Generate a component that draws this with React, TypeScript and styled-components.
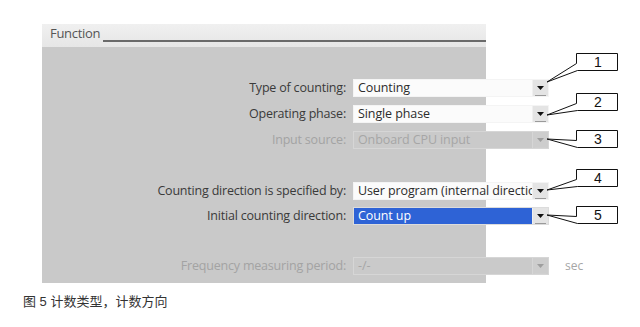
import React from "react";
import styled, { createGlobalStyle } from "styled-components";

const Global = createGlobalStyle`
  html, body { margin: 0; padding: 0; background: #ffffff; }
  body { width: 640px; height: 327px; overflow: hidden; }
`;

const Page = styled.div`
  position: relative;
  width: 640px;
  height: 327px;
  padding: 24px 0 0 42px;
  box-sizing: border-box;
  font-family: "Open Sans", "Noto Sans", sans-serif;
`;

const Panel = styled.section`
  width: 444px;
  display: flex;
  flex-direction: column;
`;

const Header = styled.div`
  height: 23px;
  display: flex;
  align-items: flex-end;
  padding: 0 0 6px 8px;
  box-sizing: border-box;
  background: linear-gradient(#f0f0f0, #e6e6e6);
`;

const HeaderTitle = styled.span`
  font-size: 13px;
  line-height: 15px;
  color: #555555;
  letter-spacing: -0.3px;
`;

const HeaderRule = styled.div`
  flex: 1;
  height: 2px;
  margin: 0 0 -1px 3px;
  background: #6a6a6a;
`;

const Body = styled.div`
  background: #c9c9c9;
  padding: 32px 0 8px 0;
  display: grid;
  grid-template-columns: 304px 196px auto;
  column-gap: 7px;
  align-items: center;
`;

const Label = styled.div<{ $disabled?: boolean; $top: number }>`
  grid-column: 1;
  margin-top: ${(p) => p.$top}px;
  text-align: right;
  font-size: 12.5px;
  line-height: 18px;
  white-space: nowrap;
  color: ${(p) => (p.$disabled ? "#a3a3a3" : "#3a3a3a")};
  letter-spacing: -0.2px;
`;

const Field = styled.div<{ $variant: "normal" | "disabled" | "selected"; $top: number }>`
  grid-column: 2;
  margin-top: ${(p) => p.$top}px;
  height: 18px;
  display: flex;
  box-sizing: border-box;
  background: ${(p) => (p.$variant === "disabled" ? "#cacaca" : "#fbfbfb")};
  border: 1px solid ${(p) => (p.$variant === "disabled" ? "#d6d6d6" : p.$variant === "selected" ? "#dcdcdc" : "#f4f4f4")};
`;

const Value = styled.div<{ $variant: "normal" | "disabled" | "selected" }>`
  flex: 1;
  min-width: 0;
  overflow: hidden;
  white-space: nowrap;
  padding-left: 4px;
  font-size: 12.5px;
  line-height: 16px;
  letter-spacing: -0.1px;
  color: ${(p) => (p.$variant === "disabled" ? "#a6a6a6" : p.$variant === "selected" ? "#ffffff" : "#2c2c2c")};
  background: ${(p) => (p.$variant === "selected" ? "#2e63d6" : "transparent")};
`;

const Button = styled.div<{ $disabled?: boolean }>`
  width: 15px;
  flex: none;
  position: relative;
  background: ${(p) => (p.$disabled ? "#cdcdcd" : "#e4e4e4")};
  border-left: 1px solid ${(p) => (p.$disabled ? "#d6d6d6" : "#f0f0f0")};
  display: flex;
  align-items: center;
  justify-content: center;
  &::after {
    content: "";
    position: absolute;
    left: 2px;
    right: 2px;
    bottom: 0;
    height: 1px;
    background: ${(p) => (p.$disabled ? "#cfcfcf" : "#9a9a9a")};
  }
`;

const Unit = styled.div<{ $top: number }>`
  grid-column: 3;
  margin-top: ${(p) => p.$top}px;
  font-size: 12px;
  line-height: 18px;
  color: #a6a6a6;
  padding-left: 9px;
`;

const Caption = styled.div`
  margin: 11px 0 0 -19px;
  font-family: "Liberation Sans", "Noto Sans CJK SC", sans-serif;
  font-size: 13px;
  line-height: 15px;
  color: #333333;
`;

const Overlay = styled.svg`
  position: absolute;
  left: 0;
  top: 0;
  pointer-events: none;
`;

type Variant = "normal" | "disabled" | "selected";

const Arrow = ({ disabled }: { disabled?: boolean }) => (
  <svg width="7" height="4" viewBox="0 0 7 4">
    <polygon points="0,0 7,0 3.5,4" fill={disabled ? "#9e9e9e" : "#111"} />
  </svg>
);

const rows: { label: string; value: string; variant: Variant; top: number; unit?: string }[] = [
  { label: "Type of counting:", value: "Counting", variant: "normal", top: 0 },
  { label: "Operating phase:", value: "Single phase", variant: "normal", top: 8 },
  { label: "Input source:", value: "Onboard CPU input", variant: "disabled", top: 8 },
  { label: "Counting direction is specified by:", value: "User program (internal direction control)", variant: "normal", top: 33 },
  { label: "Initial counting direction:", value: "Count up", variant: "selected", top: 7 },
  { label: "Frequency measuring period:", value: "-/-", variant: "disabled", top: 32, unit: "sec" },
];

const callouts = [
  { n: "1", y: 53, tip: [547, 82] },
  { n: "2", y: 93, tip: [547, 115] },
  { n: "3", y: 130, tip: [547, 139] },
  { n: "4", y: 169, tip: [547, 190] },
  { n: "5", y: 206, tip: [547, 215] },
];

export default function App() {
  return (
    <>
      <Global />
      <Page>
        <Panel>
          <Header>
            <HeaderTitle>Function</HeaderTitle>
            <HeaderRule />
          </Header>
          <Body>
            {rows.map((r) => (
              <React.Fragment key={r.label}>
                <Label $disabled={r.variant === "disabled"} $top={r.top}>
                  {r.label}
                </Label>
                <Field $variant={r.variant} $top={r.top}>
                  <Value $variant={r.variant}>{r.value}</Value>
                  <Button $disabled={r.variant === "disabled"}>
                    <Arrow disabled={r.variant === "disabled"} />
                  </Button>
                </Field>
                {r.unit ? <Unit $top={r.top}>{r.unit}</Unit> : <span />}
              </React.Fragment>
            ))}
          </Body>
        </Panel>
        <Caption>图 5 计数类型，计数方向</Caption>
        <Overlay width="640" height="327" viewBox="0 0 640 327">
          {callouts.map((c) => {
            const x = 576.5;
            const top = c.y + 0.5;
            const bottom = c.y + 17.5;
            const right = 617.5;
            const [tx, ty] = c.tip;
            const p = `${x},${top} ${right},${top} ${right},${bottom} ${x + 1},${bottom} ${tx},${ty} ${x},${top + 10}`;
            return (
              <g key={c.n}>
                <polygon points={p} fill="#ffffff" stroke="#111" strokeWidth="1" strokeLinejoin="miter" />
                <text
                  x={(x + right) / 2 + 1}
                  y={c.y + 14}
                  textAnchor="middle"
                  fontFamily="Liberation Sans, Arial, sans-serif"
                  fontSize="14"
                  fill="#111"
                >
                  {c.n}
                </text>
              </g>
            );
          })}
        </Overlay>
      </Page>
    </>
  );
}
